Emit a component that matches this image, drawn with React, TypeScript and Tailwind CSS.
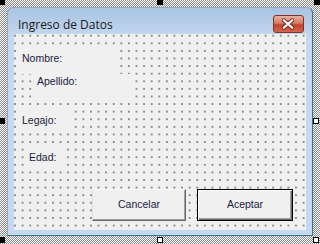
import React from 'react';

// VBA UserForm in design mode: hatched selection frame, handles, dotted grid.

const Handle: React.FC<{ className: string; filled?: boolean }> = ({ className, filled }) => (
    <div
        className={`absolute w-[6px] h-[6px] border border-black ${filled ? 'bg-black' : 'bg-white'} ${className}`}
    />
);

const FormLabel: React.FC<{ text: string; className: string }> = ({ text, className }) => (
    <div className={`bg-[#f0f0f0] text-[10.5px] leading-[12px] text-[#1c1c3c] ${className}`}>
        {text}
    </div>
);

const CloseIcon: React.FC = () => (
    <svg width="31" height="18" viewBox="0 0 31 18">
        <path d="M10.5 5 L19.5 13 M19.5 5 L10.5 13" stroke="#6a2418" strokeWidth="4.2" strokeLinecap="round" />
        <path d="M10.5 5 L19.5 13 M19.5 5 L10.5 13" stroke="#ffffff" strokeWidth="2.4" strokeLinecap="round" />
    </svg>
);

const App: React.FC = () => {
    return (
        <div
            className="relative w-[320px] h-[244px] overflow-hidden pl-[7px] pt-[7px] pr-[7px] pb-[8px] bg-[repeating-conic-gradient(#8a8a8a_0_25%,#ffffff_0_50%)] [background-size:2px_2px]"
            style={{ fontFamily: '"Liberation Sans", Arial, sans-serif' }}
        >
            <div className="flex flex-col w-full h-full rounded-t-[6px] border border-t-[#8ea7c6] border-l-[#8ea7c6] border-r-[#2a7a94] border-b-[#2a7a94] bg-[linear-gradient(#a9c3e3,#c6d9f0_30px,#c6d9f0)]">
                {/* title bar */}
                <div className="flex items-start h-[26px] pl-[10px] pr-[8px] shrink-0">
                    <span
                        className="mt-[10px] text-[12px] leading-[14px] text-[#1a1a1a]"
                        style={{ fontFamily: '"Open Sans", "Noto Sans", sans-serif' }}
                    >
                        Ingreso de Datos
                    </span>
                    <div className="ml-auto mt-[7px] w-[31px] h-[18px] rounded-[3px] border border-[#7e3426] bg-[linear-gradient(#e8b0a0,#d77a63_45%,#c2432e_55%,#d2664d)] flex items-center justify-center">
                        <CloseIcon />
                    </div>
                </div>

                {/* client area */}
                <div className="px-[6px] pb-[5px] flex-1 flex">
                    <div className="flex-1 flex flex-col bg-[#f0f0f0] bg-[radial-gradient(circle,#3c3c3c_0.45px,transparent_0.95px)] [background-size:7.6px_7.6px] [background-position:-2.8px_-2.1px]">
                        <FormLabel text="Nombre:" className="mt-[14px] ml-[4px] w-[102px] h-[26px] pt-[4px] pl-[4px]" />
                        <FormLabel text="Apellido:" className="ml-[19px] w-[102px] h-[25px] pt-[1px] pl-[4px]" />
                        <FormLabel text="Legajo:" className="mt-[11px] ml-[4px] w-[56px] h-[22px] pt-[4px] pl-[4px]" />
                        <FormLabel text="Edad:" className="mt-[16px] ml-[11px] w-[38px] h-[22px] pt-[3px] pl-[4px]" />

                        <div className="flex mt-[19px] ml-[78px] gap-[11px]">
                            <div className="w-[94px] h-[32px] flex items-center justify-center bg-[#f0f0f0] border border-t-[#f8f8f8] border-l-[#e0e0e0] border-r-[#696969] border-b-[#696969] shadow-[inset_-1px_-1px_0_#a0a0a0] text-[10.5px] text-[#1c1c3c]">
                                Cancelar
                            </div>
                            <div className="w-[96px] h-[32px] flex items-center justify-center bg-[#f0f0f0] border border-black shadow-[inset_1px_1px_0_#ffffff,inset_-1px_-1px_0_#696969,inset_-2px_-2px_0_#a0a0a0] text-[10.5px] text-[#1c1c3c]">
                                Aceptar
                            </div>
                        </div>
                    </div>
                </div>
            </div>

            {/* selection handles */}
            <Handle filled className="left-[-1px] top-[-1px]" />
            <Handle filled className="left-[157px] top-[-1px]" />
            <Handle filled className="left-[314px] top-[-1px]" />
            <Handle filled className="left-[-1px] top-[118px]" />
            <Handle className="left-[313px] top-[118px]" />
            <Handle filled className="left-[-1px] top-[237px]" />
            <Handle className="left-[157px] top-[237px]" />
            <Handle className="left-[313px] top-[237px]" />
        </div>
    );
};

export default App;
